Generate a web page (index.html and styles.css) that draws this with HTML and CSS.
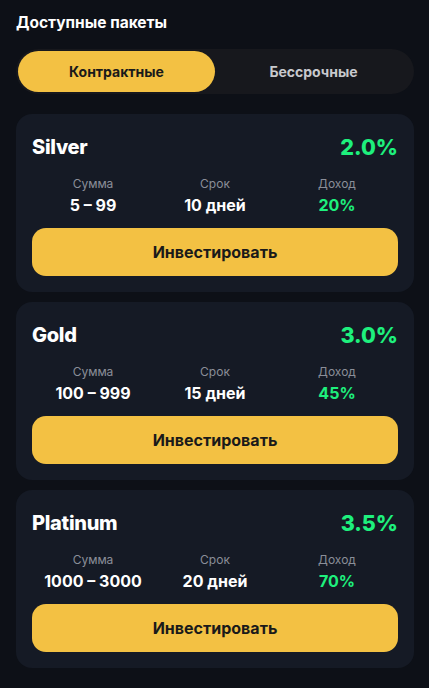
FILE: index.html
```html
<!DOCTYPE html>
<html lang="ru">
<head>
<meta charset="utf-8">
<title>Доступные пакеты</title>
<link rel="stylesheet" href="styles.css">
</head>
<body>
<main class="page">
  <h2 class="title">Доступные пакеты</h2>
  <div class="tabs">
    <button class="tab active">Контрактные</button>
    <button class="tab">Бессрочные</button>
  </div>
  <section class="card">
    <div class="card-head"><span class="name">Silver</span><span class="rate">2.0%</span></div>
    <div class="stats">
      <div class="stat"><span class="label">Сумма</span><span class="value">5 – 99</span></div>
      <div class="stat"><span class="label">Срок</span><span class="value">10 дней</span></div>
      <div class="stat"><span class="label">Доход</span><span class="value green">20%</span></div>
    </div>
    <button class="invest">Инвестировать</button>
  </section>
  <section class="card">
    <div class="card-head"><span class="name">Gold</span><span class="rate">3.0%</span></div>
    <div class="stats">
      <div class="stat"><span class="label">Сумма</span><span class="value">100 – 999</span></div>
      <div class="stat"><span class="label">Срок</span><span class="value">15 дней</span></div>
      <div class="stat"><span class="label">Доход</span><span class="value green">45%</span></div>
    </div>
    <button class="invest">Инвестировать</button>
  </section>
  <section class="card">
    <div class="card-head"><span class="name">Platinum</span><span class="rate">3.5%</span></div>
    <div class="stats">
      <div class="stat"><span class="label">Сумма</span><span class="value">1000 – 3000</span></div>
      <div class="stat"><span class="label">Срок</span><span class="value">20 дней</span></div>
      <div class="stat"><span class="label">Доход</span><span class="value green">70%</span></div>
    </div>
    <button class="invest">Инвестировать</button>
  </section>
</main>
</body>
</html>
```
FILE: styles.css
```css
* { box-sizing: border-box; }
html, body {
  margin: 0;
  padding: 0;
  background: #0d1017;
  font-family: Inter, "Noto Sans", sans-serif;
  color: #ffffff;
}
.page {
  padding: 12px 15px 20px 16px;
  display: flex;
  flex-direction: column;
}
.title {
  margin: 0;
  font-size: 15.5px;
  font-weight: 700;
  line-height: 21px;
  color: #ffffff;
}
.tabs {
  margin-top: 16px;
  display: grid;
  grid-template-columns: 1fr 1fr;
  background: #17181d;
  border-radius: 23px;
  padding: 2px;
  height: 45px;
}
.tab {
  border: none;
  background: transparent;
  font-family: inherit;
  font-size: 14px;
  font-weight: 700;
  color: #c8c9cd;
  border-radius: 21px;
  padding: 0;
}
.tab.active {
  background: #f3c143;
  color: #1a1a1a;
}
.card {
  margin-top: 20px;
  background: #151a25;
  border-radius: 16px;
  padding: 16px;
  display: flex;
  flex-direction: column;
}
.card + .card { margin-top: 10px; }
.card-head {
  display: flex;
  justify-content: space-between;
  align-items: center;
  height: 34px;
}
.name {
  font-size: 20px;
  font-weight: 800;
  letter-spacing: -0.3px;
}
.rate {
  font-size: 21.5px;
  font-weight: 800;
  color: #1ef07d;
}
.stats {
  margin-top: 12px;
  display: grid;
  grid-template-columns: 1fr 1fr 1fr;
}
.stat {
  display: flex;
  flex-direction: column;
  align-items: center;
}
.label {
  font-size: 12px;
  line-height: 16px;
  color: #8a8e98;
}
.value {
  margin-top: 3px;
  font-size: 16px;
  line-height: 21px;
  font-weight: 700;
}
.value.green { color: #1ef07d; }
.invest {
  margin-top: 12px;
  height: 48px;
  border: none;
  border-radius: 14px;
  background: #f3c143;
  color: #1a1a1a;
  font-family: inherit;
  font-size: 16px;
  font-weight: 700;
}
```
